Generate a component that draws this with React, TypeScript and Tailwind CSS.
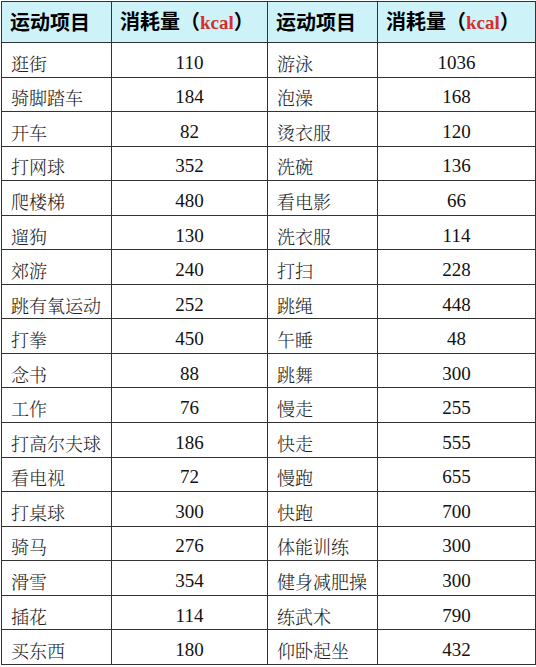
import React from 'react';

const rows: [string, string, string, string][] = [
  ['逛街', '110', '游泳', '1036'],
  ['骑脚踏车', '184', '泡澡', '168'],
  ['开车', '82', '烫衣服', '120'],
  ['打网球', '352', '洗碗', '136'],
  ['爬楼梯', '480', '看电影', '66'],
  ['遛狗', '130', '洗衣服', '114'],
  ['郊游', '240', '打扫', '228'],
  ['跳有氧运动', '252', '跳绳', '448'],
  ['打拳', '450', '午睡', '48'],
  ['念书', '88', '跳舞', '300'],
  ['工作', '76', '慢走', '255'],
  ['打高尔夫球', '186', '快走', '555'],
  ['看电视', '72', '慢跑', '655'],
  ['打桌球', '300', '快跑', '700'],
  ['骑马', '276', '体能训练', '300'],
  ['滑雪', '354', '健身减肥操', '300'],
  ['插花', '114', '练武术', '790'],
  ['买东西', '180', '仰卧起坐', '432'],
];

const cjk = "font-['Noto_Serif_CJK_SC','Noto_Sans_CJK_SC',serif] font-light";
const num = "font-['Liberation_Serif','Times_New_Roman',serif]";

const HeadName = () => (
  <th className="border border-[#333] pl-[8px] text-left text-[20px] font-bold text-black font-['Noto_Sans_CJK_SC',sans-serif]">
    运动项目
  </th>
);

const HeadKcal = () => (
  <th className="border border-[#333] pl-[8px] text-left text-[20px] font-bold text-black font-['Noto_Sans_CJK_SC',sans-serif] whitespace-nowrap">
    消耗量（<span className="text-[#d32f2f] text-[19px] font-bold font-['Liberation_Serif',serif]">kcal</span>）
  </th>
);

export default function App() {
  return (
    <div className="w-[536px] h-[667px] bg-white pt-px pl-px">
      <table className="border-collapse table-fixed w-[534px]">
        <colgroup>
          <col className="w-[110px]" />
          <col className="w-[156px]" />
          <col className="w-[110px]" />
          <col className="w-[158px]" />
        </colgroup>
        <thead>
          <tr className="h-[41px] bg-[#cdf3f8]">
            <HeadName />
            <HeadKcal />
            <HeadName />
            <HeadKcal />
          </tr>
        </thead>
        <tbody>
          {rows.map((r, i) => (
            <tr key={i} className="h-[34.55px]">
              <td className={`border border-[#333] pl-[9px] pt-[6px] pb-0 text-[18px] leading-[24px] text-[#222] whitespace-nowrap ${cjk}`}>{r[0]}</td>
              <td className={`border border-[#333] pt-[6px] text-center text-[19px] leading-[24px] text-[#111] ${num}`}>{r[1]}</td>
              <td className={`border border-[#333] pl-[9px] pt-[6px] pb-0 text-[18px] leading-[24px] text-[#222] whitespace-nowrap ${cjk}`}>{r[2]}</td>
              <td className={`border border-[#333] pt-[6px] text-center text-[19px] leading-[24px] text-[#111] ${num}`}>{r[3]}</td>
            </tr>
          ))}
        </tbody>
      </table>
    </div>
  );
}
